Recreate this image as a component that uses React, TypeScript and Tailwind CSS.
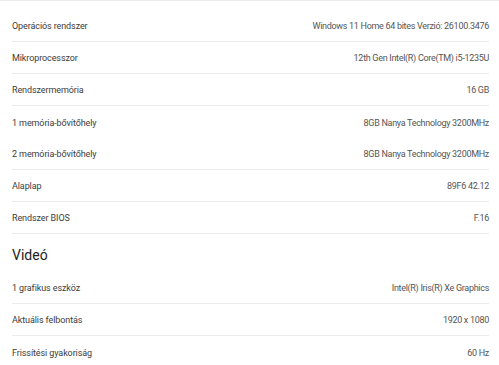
import React from "react";

type Row = { label: string; value: string; border?: boolean };

const system: Row[] = [
  { label: "Operációs rendszer", value: "Windows 11 Home 64 bites Verzió: 26100.3476" },
  { label: "Mikroprocesszor", value: "12th Gen Intel(R) Core(TM) i5-1235U" },
  { label: "Rendszermemória", value: "16 GB" },
  { label: "1 memória-bővítőhely", value: "8GB Nanya Technology 3200MHz", border: false },
  { label: "2 memória-bővítőhely", value: "8GB Nanya Technology 3200MHz" },
  { label: "Alaplap", value: "89F6 42.12" },
  { label: "Rendszer BIOS", value: "F.16" },
];

const video: Row[] = [
  { label: "1 grafikus eszköz", value: "Intel(R) Iris(R) Xe Graphics" },
  { label: "Aktuális felbontás", value: "1920 x 1080" },
  { label: "Frissítési gyakoriság", value: "60 Hz", border: false },
];

function InfoRow({ label, value, border = true }: Row) {
  return (
    <div
      className={
        "flex h-[32px] items-center justify-between pt-[3px] " +
        (border ? "border-b border-[#ececec]" : "")
      }
    >
      <span className="text-[#3c3c3c] tracking-[-0.1px]">{label}</span>
      <span className="text-[#555] tracking-[-0.3px]">{value}</span>
    </div>
  );
}

export default function App() {
  return (
    <div
      className="w-[499px] h-[365px] overflow-hidden bg-white border-t border-[#ececec] text-[9px]"
      style={{ fontFamily: "Roboto, 'Noto Sans', sans-serif" }}
    >
      <div className="pl-3 pr-[10px] pt-[9px]">
        {system.map((r) => (
          <InfoRow key={r.label} {...r} />
        ))}
        <div className="flex h-[38px] items-center pt-[4px] text-[14px] text-[#222]">Videó</div>
        {video.map((r) => (
          <InfoRow key={r.label} {...r} />
        ))}
      </div>
    </div>
  );
}
